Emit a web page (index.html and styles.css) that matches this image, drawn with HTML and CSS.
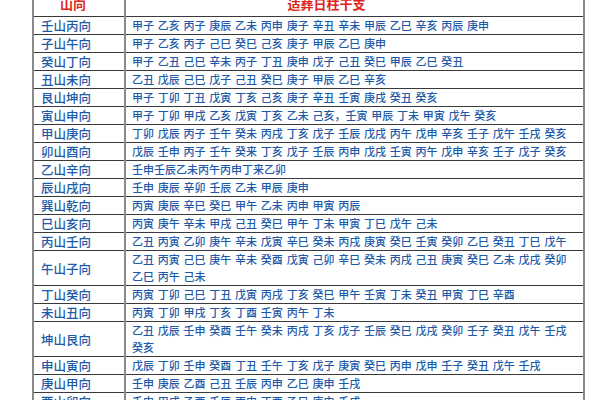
FILE: index.html
```html
<!DOCTYPE html>
<html lang="zh">
<head>
<meta charset="utf-8">
<link rel="stylesheet" href="styles.css">
</head>
<body>
<table class="tbl">
<tr class="head"><td class="dir">山向</td><td class="days">适葬日柱干支</td></tr>
<tr><td class="dir">壬山丙向</td><td class="days">甲子 乙亥 丙子 庚辰 乙未 丙申 庚子 辛丑 辛未 甲辰 乙巳 辛亥 丙辰 庚申</td></tr>
<tr><td class="dir">子山午向</td><td class="days">甲子 乙亥 丙子 己巳 癸巳 己亥 庚子 甲辰 乙巳 庚申</td></tr>
<tr><td class="dir">癸山丁向</td><td class="days">甲子 乙丑 己巳 辛未 丙子 丁丑 庚申 戊子 己丑 癸巳 甲辰 乙巳 癸丑</td></tr>
<tr><td class="dir">丑山未向</td><td class="days">乙丑 戊辰 己巳 戊子 己丑 癸巳 庚子 甲辰 乙巳 辛亥</td></tr>
<tr><td class="dir">艮山坤向</td><td class="days">甲子 丁卯 丁丑 戊寅 丁亥 己亥 庚子 辛丑 壬寅 庚戌 癸丑 癸亥</td></tr>
<tr><td class="dir">寅山申向</td><td class="days">甲子 丁卯 甲戌 乙亥 戊寅 丁亥 乙未 己亥，壬寅 甲辰 丁未 甲寅 戊午 癸亥</td></tr>
<tr><td class="dir">甲山庚向</td><td class="days">丁卯 戊辰 丙子 壬午 癸未 丙戌 丁亥 戊子 壬辰 戊戌 丙午 戊申 辛亥 壬子 戊午 壬戌 癸亥</td></tr>
<tr><td class="dir">卯山酉向</td><td class="days">戊辰 壬申 丙子 壬午 癸来 丁亥 戊子 壬辰 丙申 戊戌 壬寅 丙午 戊申 辛亥 壬子 戊子 癸亥</td></tr>
<tr><td class="dir">乙山辛向</td><td class="days">壬申壬辰乙未丙午丙申丁来乙卯</td></tr>
<tr><td class="dir">辰山戌向</td><td class="days">壬申 庚辰 辛卯 壬辰 乙未 甲辰 庚申</td></tr>
<tr><td class="dir">巽山乾向</td><td class="days">丙寅 庚辰 辛巳 癸巳 甲午 乙未 丙申 甲寅 丙辰</td></tr>
<tr><td class="dir">巳山亥向</td><td class="days">丙寅 庚午 辛未 甲戌 己丑 癸巳 甲午 丁未 甲寅 丁巳 戊午 己未</td></tr>
<tr><td class="dir">丙山壬向</td><td class="days">乙丑 丙寅 乙卯 庚午 辛未 戊寅 辛巳 癸未 丙戌 庚寅 癸巳 壬寅 癸卯 乙巳 癸丑 丁巳 戊午</td></tr>
<tr><td class="dir">午山子向</td><td class="days">乙丑 丙寅 己巳 庚午 辛未 癸酉 戊寅 己卯 辛巳 癸未 丙戌 己丑 庚寅 癸巳 乙未 戊戌 癸卯<br>乙巳 丙午 己未</td></tr>
<tr><td class="dir">丁山癸向</td><td class="days">丙寅 丁卯 己巳 丁丑 戊寅 丙戌 丁亥 癸巳 甲午 壬寅 丁未 癸丑 甲寅 丁巳 辛酉</td></tr>
<tr><td class="dir">未山丑向</td><td class="days">丙寅 丁卯 甲戌 丁亥 丁酉 壬寅 丙午 丁未</td></tr>
<tr><td class="dir">坤山艮向</td><td class="days">乙丑 戊辰 壬申 癸酉 壬午 癸未 丙戌 丁亥 戊子 壬辰 癸巳 戊戌 癸卯 壬子 癸丑 戊午 壬戌<br>癸亥</td></tr>
<tr><td class="dir">申山寅向</td><td class="days">戊辰 丁卯 壬申 癸酉 丁丑 壬午 丁亥 戊子 庚寅 癸巳 丙申 戊申 壬子 癸丑 戊午 壬戌</td></tr>
<tr><td class="dir">庚山甲向</td><td class="days">壬申 庚辰 乙酉 己丑 壬辰 丙申 乙巳 庚申 壬戌</td></tr>
<tr><td class="dir">酉山卯向</td><td class="days">壬申 甲戌 乙酉 壬辰 丙申 丁酉 乙巳 庚申 壬戌</td></tr>
</table>
</body>
</html>
```
FILE: styles.css
```css
html, body {
  margin: 0;
  padding: 0;
  background: #ffffff;
  overflow: hidden;
}
.tbl {
  border-collapse: collapse;
  margin: -12px 0 0 32px;
  width: 553px;
  border: 2px solid #8a8a8a;
  font-family: "Noto Sans CJK SC", "Noto Sans", sans-serif;
  font-weight: 500;
  color: #1d5aa8;
  table-layout: fixed;
}
.tbl td {
  border-top: 1px solid #3a3a3a;
  border-bottom: 1px solid #3a3a3a;
  padding: 0;
  line-height: 17px;
  white-space: nowrap;
  vertical-align: middle;
}
.tbl .dir {
  width: 78px;
  padding-left: 7px;
  font-size: 12.5px;
  border-right: 2px solid #8a8a8a;
}
.tbl .days {
  padding-left: 6px;
  font-size: 11px;
  word-spacing: 1.3px;
}
.head td {
  height: 26px;
  color: #e2231a;
  font-weight: bold;
  font-size: 13px;
  text-align: center;
}
.head .dir {
  padding-left: 0;
  padding-right: 12px;
  font-size: 13px;
}
.head .days {
  padding-left: 0;
  padding-right: 56px;
  font-size: 13px;
}
```
